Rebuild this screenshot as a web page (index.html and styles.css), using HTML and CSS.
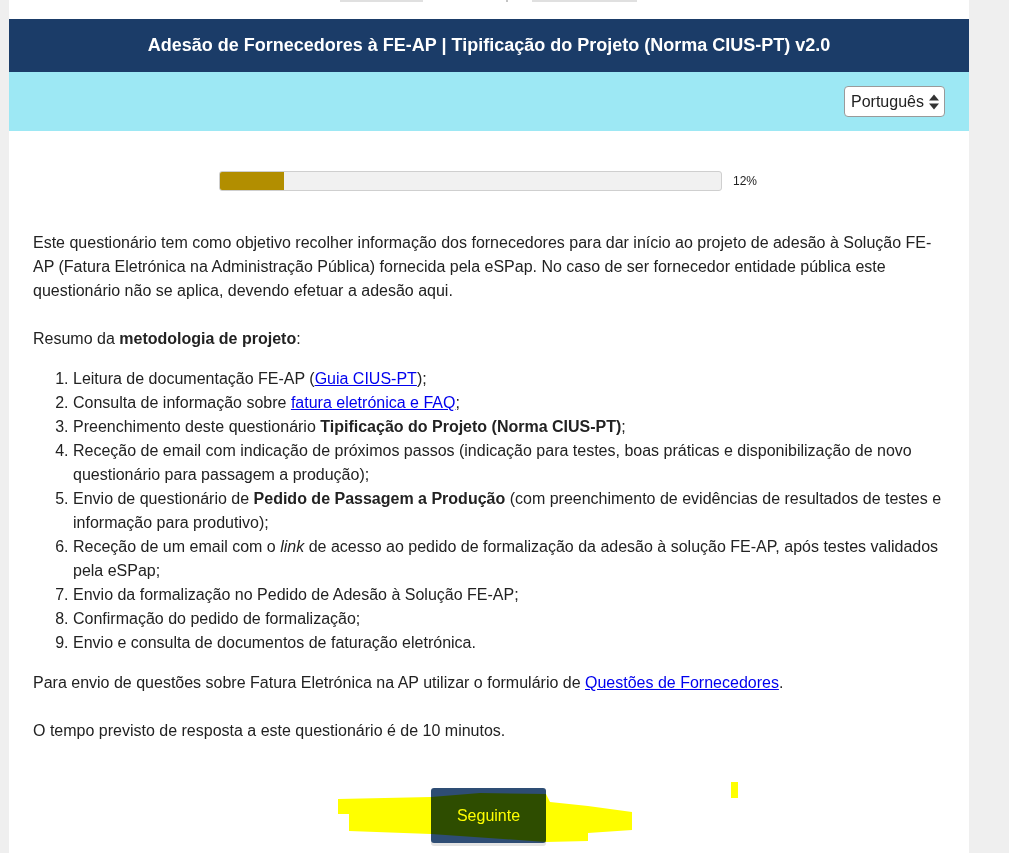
FILE: index.html
```html
<!DOCTYPE html>
<html lang="pt">
<head>
<meta charset="utf-8">
<title>Adesão de Fornecedores à FE-AP</title>
<link rel="stylesheet" href="styles.css">
</head>
<body>
<div class="page">
  <div class="topstrip">
    <span class="ghost g1"></span>
    <span class="ghost g2"></span>
    <span class="ghost g3"></span>
  </div>
  <header class="title-bar">
    <h1>Adesão de Fornecedores à FE-AP | Tipificação do Projeto (Norma CIUS-PT) v2.0</h1>
  </header>
  <div class="lang-bar">
    <div class="select-wrap">
      <select class="lang"><option>Português</option><option>English</option></select>
      <svg class="select-arrows" width="10" height="16" viewBox="0 0 10 16"><polygon points="0,6.5 5,0.5 10,6.5" fill="#333"/><polygon points="0,9.5 10,9.5 5,15.5" fill="#333"/></svg>
    </div>
  </div>
  <main class="content">
    <div class="progress-row">
      <div class="track"><div class="fill" style="width:12.7%"></div></div>
      <span class="pct">12%</span>
    </div>
    <p class="intro">Este questionário tem como objetivo recolher informação dos fornecedores para dar início ao projeto de adesão à Solução FE-AP (Fatura Eletrónica na Administração Pública) fornecida pela eSPap. No caso de ser fornecedor entidade pública este questionário não se aplica, devendo efetuar a adesão aqui.</p>
    <p class="resumo">Resumo da <strong>metodologia de projeto</strong>:</p>
    <ol class="steps">
      <li>Leitura de documentação FE-AP (<a href="#">Guia CIUS-PT</a>);</li>
      <li>Consulta de informação sobre <a href="#">fatura eletrónica e FAQ</a>;</li>
      <li>Preenchimento deste questionário <strong>Tipificação do Projeto (Norma CIUS-PT)</strong>;</li>
      <li>Receção de email com indicação de próximos passos (indicação para testes, boas práticas e disponibilização de novo questionário para passagem a produção);</li>
      <li>Envio de questionário de <strong>Pedido de Passagem a Produção</strong> (com preenchimento de evidências de resultados de testes e informação para produtivo);</li>
      <li>Receção de um email com o <em>link</em> de acesso ao pedido de formalização da adesão à solução FE-AP, após testes validados pela eSPap;</li>
      <li>Envio da formalização no Pedido de Adesão à Solução FE-AP;</li>
      <li>Confirmação do pedido de formalização;</li>
      <li>Envio e consulta de documentos de faturação eletrónica.</li>
    </ol>
    <p class="contact">Para envio de questões sobre Fatura Eletrónica na AP utilizar o formulário de <a href="#">Questões de Fornecedores</a>.</p>
    <p class="time">O tempo previsto de resposta a este questionário é de 10 minutos.</p>
    <div class="actions">
      <button class="next" type="button">Seguinte</button>
    </div>
  </main>
</div>
<svg class="highlight" width="1009" height="853" viewBox="0 0 1009 853">
  <polygon points="338,799 431,797 480,793 546,794 550,802 588,806 632,812 632,830 588,833 588,841 546,842 431,834 349,831 349,814 338,814" fill="#ffff00"/>
  <rect x="731" y="782" width="7" height="16" fill="#ffff00"/>
</svg>
</body>
</html>
```

FILE: styles.css
```css
html, body {
  margin: 0;
  padding: 0;
}

body {
  background: #efefef;
  font-family: "Liberation Sans", Arial, sans-serif;
  color: #222;
  position: relative;
  min-height: 853px;
}

.page {
  margin-left: 9px;
  width: 960px;
  background: #ffffff;
  min-height: 853px;
}

.topstrip {
  height: 19px;
  display: flex;
  align-items: flex-start;
}

.ghost {
  display: block;
  height: 2px;
  background: #e0e0e0;
}

.g1 { margin-left: 331px; width: 83px; }
.g2 { margin-left: 83px; width: 2px; background: #c4c4c4; }
.g3 { margin-left: 24px; width: 105px; }

.title-bar {
  height: 53px;
  background: #1b3c68;
  display: flex;
  align-items: center;
  justify-content: center;
}

.title-bar h1 {
  margin: 0;
  color: #ffffff;
  font-size: 18px;
  font-weight: bold;
}

.lang-bar {
  background: #9de8f4;
  padding: 14px 24px;
  display: flex;
  justify-content: flex-end;
}

.select-wrap {
  position: relative;
  width: 101px;
  height: 31px;
}

.lang {
  appearance: none;
  -webkit-appearance: none;
  width: 101px;
  height: 31px;
  box-sizing: border-box;
  border: 1px solid #9a9a9a;
  border-radius: 4px;
  background: #ffffff;
  padding: 0 0 0 6px;
  font-family: "Liberation Sans", Arial, sans-serif;
  font-size: 16px;
  color: #222;
  margin: 0;
}

.select-arrows {
  position: absolute;
  right: 6px;
  top: 8px;
  pointer-events: none;
}

.content {
  padding: 0 24px;
}

.progress-row {
  margin-top: 40px;
  display: flex;
  justify-content: center;
  align-items: center;
  gap: 11px;
  padding-right: 2px;
}

.track {
  width: 503px;
  height: 20px;
  box-sizing: border-box;
  border: 1px solid #cfcfcf;
  border-radius: 3px;
  background: #f1f1f1;
  overflow: hidden;
}

.fill {
  height: 100%;
  background: #b28e00;
}

.pct {
  font-size: 12px;
  color: #222;
  width: 24px;
}

p, li {
  font-size: 16px;
  line-height: 24px;
}

p {
  margin: 0;
}

.intro {
  margin-top: 40px;
  margin-bottom: 24px;
}

.resumo {
  margin-bottom: 16px;
}

.steps {
  margin: 0 0 16px;
  padding-left: 40px;
}

.contact {
  margin-bottom: 24px;
}

a {
  color: #0000ee;
  text-decoration: underline;
}

.actions {
  margin-top: 45px;
  display: flex;
  justify-content: center;
  padding-right: 2px;
}

.next {
  background: #2e4d74;
  color: #ffffff;
  border: none;
  border-radius: 3px;
  box-shadow: 0 3px 0 #e3e3e3;
  font-family: "Liberation Sans", Arial, sans-serif;
  font-size: 16px;
  line-height: 19px;
  padding: 18px 25px 18px 26px;
  width: 115px;
  height: 55px;
}

.highlight {
  position: absolute;
  left: 0;
  top: 0;
  pointer-events: none;
  mix-blend-mode: multiply;
}
```
